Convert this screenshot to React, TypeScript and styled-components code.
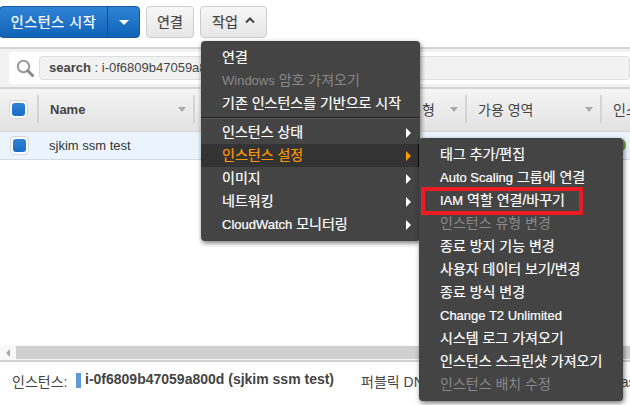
import React from "react";
import styled, { createGlobalStyle } from "styled-components";

const Global = createGlobalStyle`
  html, body { margin: 0; padding: 0; background: #fff; }
  body { font-family: "Liberation Sans", "Noto Sans CJK KR", sans-serif; font-size: 14px; color: #333; }
  #root { width: 630px; height: 405px; overflow: hidden; }
`;

const Page = styled.div`
  position: relative;
  width: 630px;
  height: 405px;
  overflow: hidden;
  display: flex;
  flex-direction: column;
  background: #fff;
`;

const Latin = styled.span<{ $bold?: boolean }>`
  font-size: 13px;
  font-weight: ${(p) => (p.$bold ? 700 : 400)};
`;

const Toolbar = styled.div`
  height: 47px;
  box-sizing: border-box;
  padding: 6px 0 0;
  display: flex;
  gap: 6px;
  align-items: flex-start;
`;

const SplitPrimary = styled.div`
  width: 141px;
  height: 32px;
  margin-left: -1px;
  display: flex;
  border-radius: 4px;
  border: 1px solid #15589f;
  box-sizing: border-box;
  background: linear-gradient(#2f83d6, #1163b7);
  color: #fff;
  -webkit-text-stroke: 0.25px #fff;
  overflow: hidden;
`;

const SplitLabel = styled.div`
  width: 108px;
  display: flex;
  align-items: center;
  justify-content: center;
  border-right: 1px solid #0d4f94;
  padding-bottom: 3px;
  box-sizing: border-box;
  letter-spacing: 0.6px;
`;

const SplitCaret = styled.div`
  flex: 1;
  display: flex;
  align-items: center;
  justify-content: center;
  &::after {
    content: "";
    border-left: 5px solid transparent;
    border-right: 5px solid transparent;
    border-top: 5px solid #fff;
  }
`;

const GreyButton = styled.div<{ $w: number }>`
  width: ${(p) => p.$w}px;
  height: 32px;
  box-sizing: border-box;
  border: 1px solid #ccc;
  border-radius: 4px;
  background: linear-gradient(#f7f7f7, #e6e6e6);
  color: #444;
  -webkit-text-stroke: 0.25px #444;
  display: flex;
  align-items: center;
  justify-content: center;
  gap: 7px;
  padding-bottom: 3px;
`;

const SearchBar = styled.div`
  height: 42px;
  box-sizing: border-box;
  border-top: 2px solid #d5d5d5;
  border-bottom: 2px solid #d5d5d5;
  background: #f2f2f2;
  padding: 3px 0 3px 9px;
`;

const SearchField = styled.div`
  height: 100%;
  background: #fff;
  border-radius: 4px 0 0 4px;
  display: flex;
  align-items: center;
  padding-left: 7px;
  gap: 5px;
`;

const Token = styled.div`
  flex: 1;
  height: 24px;
  box-sizing: border-box;
  background: #f2f2f2;
  border: 1px solid #ddd;
  border-radius: 4px;
  padding-left: 9px;
  font-size: 13px;
  line-height: 21px;
  color: #444;
  white-space: nowrap;
  overflow: hidden;
  b { font-weight: 700; }
`;

const HeaderRow = styled.div`
  height: 43px;
  box-sizing: border-box;
  display: flex;
  background: linear-gradient(#f5f5f5, #e2e2e2);
  border-bottom: 1px solid #d5d5d5;
  align-items: center;
  padding-bottom: 2px;
`;

const HeaderCell = styled.div<{ $w: number; $pad?: number; $end?: boolean }>`
  width: ${(p) => p.$w}px;
  flex: none;
  height: 28px;
  box-sizing: border-box;
  display: flex;
  align-items: center;
  justify-content: space-between;
  padding: 0 7px 0 ${(p) => p.$pad ?? 11}px;
  border-right: ${(p) => (p.$end ? "none" : "2px solid #d4d4d4")};
  color: #444;
  white-space: nowrap;
  overflow: hidden;
`;

const SortCaret = styled.span`
  width: 0;
  height: 0;
  border-left: 4px solid transparent;
  border-right: 4px solid transparent;
  border-top: 5px solid #aaa;
`;

const Check = styled.span`
  display: block;
  box-sizing: border-box;
  width: 19px;
  height: 19px;
  padding: 2px;
  border: 1px solid #d6d6d6;
  border-radius: 4px;
  background: #fafafa;
  &::after {
    content: "";
    display: block;
    width: 100%;
    height: 100%;
    border-radius: 3px;
    background: linear-gradient(#2f83d6, #1a6cc5);
  }
`;

const CheckCell = styled.div`
  width: 39px;
  flex: none;
  padding-left: 9px;
  box-sizing: border-box;
  height: 28px;
  border-right: 2px solid #d4d4d4;
  display: flex;
  align-items: center;
`;

const DataRow = styled.div`
  height: 28px;
  box-sizing: border-box;
  background: #ebf3fd;
  border-bottom: 1px solid #d5dbe3;
  display: flex;
  align-items: center;
  padding-left: 10px;
  color: #333;
  font-size: 13px;
  gap: 20px;
`;

const TableBody = styled.div`
  flex: 1;
`;

const ScrollTrack = styled.div`
  height: 15px;
  background: #f8f8f8;
  display: flex;
  border-bottom: 2px solid #d0d0d0;
`;

const ScrollArrow = styled.div`
  width: 16px;
  display: flex;
  align-items: center;
  justify-content: center;
  &::after {
    content: "";
    border-top: 4px solid transparent;
    border-bottom: 4px solid transparent;
    border-right: 4px solid #aaa;
  }
`;

const ScrollThumb = styled.div`
  flex: 1;
  margin: 1px 0;
  background: #d0d0d0;
`;

const Details = styled.div`
  height: 43px;
  box-sizing: border-box;
  padding: 9px 0 0 12px;
  display: flex;
  align-items: flex-start;
  white-space: nowrap;
  color: #444;
`;

const DetailLabel = styled.span`
  width: 64px;
  flex: none;
`;

const StatusChip = styled.span`
  width: 5px;
  height: 15px;
  flex: none;
  background: #5a9bd8;
  margin: 2px 4px 0 0;
`;

const DetailValue = styled.b`
  font-weight: 700;
  width: 276px;
  flex: none;
`;

const Menu = styled.div<{ $x: number; $y: number; $w: number; $h: number; $z: number }>`
  position: absolute;
  left: ${(p) => p.$x}px;
  top: ${(p) => p.$y}px;
  width: ${(p) => p.$w}px;
  height: ${(p) => p.$h}px;
  z-index: ${(p) => p.$z};
  box-sizing: border-box;
  background: #444;
  border-radius: 4px;
  padding-top: 5px;
  box-shadow: 1px 2px 5px rgba(0, 0, 0, 0.55);
`;

const Item = styled.div<{ $off?: boolean; $on?: boolean; $pad: number }>`
  height: 23px;
  line-height: 23px;
  box-sizing: border-box;
  padding-left: ${(p) => p.$pad}px;
  padding-right: ${(p) => (p.$on ? 7 : 9)}px;
  margin-right: ${(p) => (p.$on ? 1 : 0)}px;
  border-right: ${(p) => (p.$on ? "1px solid #111" : "none")};
  display: flex;
  justify-content: space-between;
  align-items: center;
  color: ${(p) => (p.$off ? "#888" : p.$on ? "#f90" : "#fff")};
  background: ${(p) => (p.$on ? "#333" : "transparent")};
  -webkit-text-stroke: ${(p) => (p.$off ? "0" : "0.2px")};
  white-space: nowrap;
`;

const ItemText = styled.span``;

const Arrow = styled.span<{ $on?: boolean }>`
  width: 0;
  height: 0;
  border-top: 5px solid transparent;
  border-bottom: 5px solid transparent;
  border-left: 5px solid ${(p) => (p.$on ? "#f90" : "#fff")};
`;

const Divider = styled.div`
  height: 1px;
  margin: 2px 0;
  background: #222;
  border-bottom: 1px solid #555;
`;

const RedBox = styled.div`
  position: absolute;
  left: 421px;
  top: 187px;
  width: 162px;
  height: 28px;
  box-sizing: border-box;
  border: 4px solid #ed1c24;
  z-index: 5;
`;

const GreenDot = styled.div`
  position: absolute;
  left: 612px;
  top: 138px;
  width: 14px;
  height: 14px;
  border-radius: 50%;
  background: #6cb33f;
`;

const SearchIcon = () => (
  <svg width="18" height="18" viewBox="0 0 18 18" fill="none">
    <circle cx="7.5" cy="7.5" r="5.7" stroke="#999" strokeWidth="2" />
    <path d="M11.8 11.8L16.5 16.5" stroke="#888" strokeWidth="3" strokeLinecap="round" />
  </svg>
);

const ChevronUp = () => (
  <svg width="10" height="7" viewBox="0 0 10 7" fill="none">
    <path d="M1 5.5L5 1.5L9 5.5" stroke="#444" strokeWidth="2" />
  </svg>
);

const L = ({ children }: { children: React.ReactNode }) => <Latin>{children}</Latin>;

const mainTop: React.ReactNode[] = [
  "연결",
  <><L>Windows</L> 암호 가져오기</>,
  "기존 인스턴스를 기반으로 시작",
];
const mainSub: React.ReactNode[] = [
  "인스턴스 상태",
  "인스턴스 설정",
  "이미지",
  "네트워킹",
  <><L>CloudWatch</L> 모니터링</>,
];
const sub: { label: React.ReactNode; off?: boolean }[] = [
  { label: "태그 추가/편집" },
  { label: <><L>Auto Scaling</L> 그룹에 연결</> },
  { label: <><L>IAM</L> 역할 연결/바꾸기</> },
  { label: "인스턴스 유형 변경", off: true },
  { label: "종료 방지 기능 변경" },
  { label: "사용자 데이터 보기/변경" },
  { label: "종료 방식 변경" },
  { label: <L>Change T2 Unlimited</L> },
  { label: "시스템 로그 가져오기" },
  { label: "인스턴스 스크린샷 가져오기" },
  { label: "인스턴스 배치 수정", off: true },
];

export default function App() {
  return (
    <Page>
      <Global />
      <Toolbar>
        <SplitPrimary>
          <SplitLabel>인스턴스 시작</SplitLabel>
          <SplitCaret />
        </SplitPrimary>
        <GreyButton $w={48}>연결</GreyButton>
        <GreyButton $w={67}>
          작업 <ChevronUp />
        </GreyButton>
      </Toolbar>
      <SearchBar>
        <SearchField>
          <SearchIcon />
          <Token>
            <b>search</b> : i-0f6809b47059a800d
          </Token>
        </SearchField>
      </SearchBar>
      <HeaderRow>
        <CheckCell>
          <Check />
        </CheckCell>
        <HeaderCell $w={156}>
          <Latin $bold>Name</Latin> <SortCaret />
        </HeaderCell>
        <HeaderCell $w={272} $pad={227}>
          형 <SortCaret />
        </HeaderCell>
        <HeaderCell $w={135}>
          가용 영역 <SortCaret />
        </HeaderCell>
        <HeaderCell $w={28} $end>
          인스
        </HeaderCell>
      </HeaderRow>
      <DataRow>
        <Check />
        <span>sjkim ssm test</span>
      </DataRow>
      <TableBody />
      <ScrollTrack>
        <ScrollArrow />
        <ScrollThumb />
      </ScrollTrack>
      <Details>
        <DetailLabel>인스턴스:</DetailLabel>
        <StatusChip />
        <DetailValue>i-0f6809b47059a800d (sjkim ssm test)</DetailValue>
        <span>퍼블릭 DNS: ec2-13-125-111-11.ap-northeast</span>
      </Details>

      <GreenDot />
      <Menu $x={201} $y={41} $w={219} $h={200} $z={2}>
        {mainTop.map((t, i) => (
          <Item key={i} $pad={21} $off={i === 1}>
            <ItemText>{t}</ItemText>
          </Item>
        ))}
        <Divider />
        {mainSub.map((t, i) => (
          <Item key={i} $pad={21} $on={i === 1}>
            <ItemText>{t}</ItemText>
            <Arrow $on={i === 1} />
          </Item>
        ))}
      </Menu>
      <Menu $x={419} $y={138} $w={204} $h={263} $z={3}>
        {sub.map((s, i) => (
          <Item key={i} $pad={21} $off={s.off}>
            <ItemText>{s.label}</ItemText>
          </Item>
        ))}
      </Menu>
      <RedBox />
    </Page>
  );
}
